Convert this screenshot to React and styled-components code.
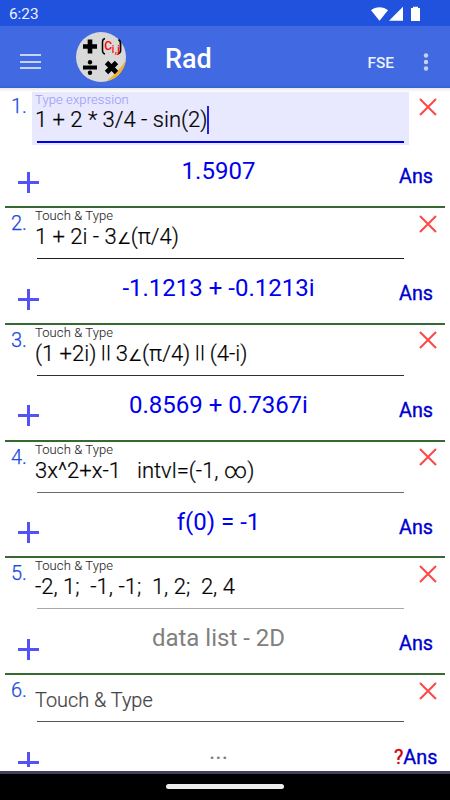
import React from 'react';
import styled, { createGlobalStyle } from 'styled-components';

const GlobalStyle = createGlobalStyle`
  * {
    box-sizing: border-box;
  }

  body {
    margin: 0;
    font-family: Roboto, 'DejaVu Sans', sans-serif;
    background: #fff;
  }
`;

const Screen = styled.div`
  display: flex;
  flex-direction: column;
  width: 450px;
  height: 800px;
  overflow: hidden;
  background: #fff;
`;

const StatusBar = styled.div`
  display: flex;
  flex: none;
  align-items: center;
  justify-content: space-between;
  height: 26px;
  padding: 2px 29px 0 9px;
  color: #eef2ff;
  background: #2152dd;
  font-size: 15.3px;
  line-height: 20px;
`;

const Toolbar = styled.header`
  display: flex;
  flex: none;
  align-items: center;
  height: 62px;
  padding: 0 20px;
  color: #fff;
  background: #4169e1;
  border-bottom: 2px solid #3763d8;
`;

const MenuButton = styled.button`
  display: flex;
  flex-direction: column;
  justify-content: space-between;
  width: 21px;
  height: 15px;
  margin-top: 11px;
  padding: 0;
  border: 0;
  background: none;
`;

const MenuLine = styled.span`
  height: 2px;
  background: #c6d2f6;
`;

const Logo = styled.svg`
  width: 52px;
  height: 52px;
  margin: 2px 0 0 34px;
`;

const Title = styled.h1`
  flex: 1;
  margin: 5px 0 0 38px;
  font-size: 27px;
  font-weight: 500;
  line-height: 32px;
`;

const FormatButton = styled.button`
  margin: 14px 29px 0 0;
  padding: 0;
  border: 0;
  color: #eef2ff;
  background: none;
  font: 500 15.4px/20px Roboto, sans-serif;
`;

const Dots = styled.svg`
  width: 6px;
  height: 20px;
  margin: 12px 1px 0 0;
`;

const List = styled.main`
  height: 683px;
  flex: none;
  padding: 3.25px 5px 0;
  background: linear-gradient(#e9e9e9, #fff 4px);
`;

const Row = styled.section`
  height: ${(props) => (props.$last ? 95 : 116.75)}px;
  border-bottom: ${(props) => (props.$last ? 'none' : '2px solid #376a33')};
`;

const InputLine = styled.div`
  display: flex;
  height: ${(props) => (props.$short ? 51 : 55)}px;
  padding-top: 1px;
`;

const Index = styled.div`
  width: 27px;
  padding: 2px 0 0 6px;
  color: #1a4bdf;
  font-size: 20px;
  font-weight: 300;
  line-height: 24px;
  -webkit-text-stroke: 0.25px;
`;

const Field = styled.div`
  width: 377px;
  height: ${(props) => (props.$short ? 49 : 53)}px;
  padding: 0 5px 0 3px;
  background: ${(props) => (props.$active ? '#e8e8ff' : 'transparent')};
`;

const Label = styled.div`
  height: 15px;
  color: ${(props) => (props.$active ? '#9f9ff8' : '#2a2a2a')};
  font-size: 13px;
  font-weight: 300;
  line-height: ${(props) => (props.$active ? 15 : 14)}px;
  letter-spacing: 0.1px;
  -webkit-text-stroke: 0.1px;
`;

const Expression = styled.div`
  display: flex;
  align-items: center;
  height: 26px;
  color: #000;
  font-size: 22px;
  font-weight: 300;
  line-height: 26px;
  white-space: pre;
  -webkit-text-stroke: 0.22px;
`;

const Angle = styled.span`
  font-size: 16px;
  line-height: 0;
  -webkit-text-stroke: 0;
`;

const Parallel = styled.span`
  margin: 0 -1px 0 -0.7px;
  font-size: 18.5px;
  font-weight: 400;
  line-height: 0;
  letter-spacing: 0.7px;
  vertical-align: 2.5px;
  -webkit-text-stroke: 0;
`;

const Caret = styled.span`
  width: 2px;
  height: 28px;
  background: #2020e8;
`;

const Hint = styled.div`
  height: 35px;
  padding-top: 12px;
  color: #444;
  font-size: 19.9px;
  font-weight: 300;
  line-height: 25px;
  -webkit-text-stroke: 0.2px;
`;

const Underline = styled.div`
  height: ${(props) => props.$thickness}px;
  margin: ${(props) => (props.$short ? 10 : 8)}px 0 0 2px;
  background: ${(props) => props.$color};
`;

const CloseIcon = styled.svg`
  width: 18px;
  height: 18px;
  margin: 5.5px 0 0 10px;
`;

const ResultLine = styled.div`
  display: grid;
  grid-template-columns: 46px 335px 1fr;
  height: ${(props) => (props.$short ? 44 : 59)}px;
`;

const PlusIcon = styled.svg`
  width: 21px;
  height: ${(props) => props.$height}px;
  margin: 25.5px 0 0 13px;
`;

const Result = styled.div`
  padding-top: 11px;
  color: ${(props) => props.$color};
  font-size: 24px;
  line-height: 28px;
  text-align: center;
  white-space: nowrap;
`;

const Answer = styled.div`
  padding: ${(props) => (props.$unknown ? '20px 0 0 8px' : '19px 0 0 13px')};
  color: #0000cf;
  font-size: 19.8px;
  line-height: ${(props) => (props.$unknown ? 23 : 24)}px;
  -webkit-text-stroke: 0.35px;
`;

const Unknown = styled.span`
  color: #d00000;
`;

const NavBar = styled.footer`
  display: flex;
  flex: 1;
  justify-content: center;
  padding-top: 10px;
  border-top: 3px solid #43415a;
  background: #000;
`;

const NavPill = styled.div`
  width: 118px;
  height: 5px;
  border-radius: 2.5px;
  background: #ededed;
`;

const entries = [
  { id: 1, label: 'Type expression', expression: '1 + 2 * 3/4 - sin(2)', result: '1.5907', line: '#0000e6', active: true },
  { id: 2, label: 'Touch & Type', expression: '1 + 2i - 3∠(π/4)', result: '-1.1213 + -0.1213i', line: '#1c1c1c' },
  { id: 3, label: 'Touch & Type', expression: '(1 +2i) || 3∠(π/4) || (4-i)', result: '0.8569 + 0.7367i', line: '#303030' },
  { id: 4, label: 'Touch & Type', expression: '3x^2+x-1   intvl=(-1, ∞)', result: 'f(0) = -1', line: '#6a6a6a' },
  { id: 5, label: 'Touch & Type', expression: '-2, 1;  -1, -1;  1, 2;  2, 4', result: 'data list - 2D', line: '#a8a8a8', muted: true },
  { id: 6, hint: 'Touch & Type', result: '...', line: '#555', muted: true, unknown: true },
];

// the angle and parallel operators are set smaller than the digits
const renderExpression = (text) =>
  text.split(/(∠|\|\|)/).map((part, i) => {
    if (part === '∠') return <Angle key={i}>{part}</Angle>;
    if (part === '||') return <Parallel key={i}>{part}</Parallel>;
    return part;
  });

const StatusIcons = () => (
  <svg width="50" height="16" viewBox="0 0 50 16" fill="#fff">
    <path d="M0 4.2C4.5.2 12.5.2 17 4.2L8.5 14.8Z" />
    <path d="M32 .8V14.8H18Z" />
    <path d="M42 .8h5v1.2h2v13h-9v-13h2Z" />
  </svg>
);

const AppLogo = () => (
  <Logo viewBox="0 0 52 52">
    <defs>
      <clipPath id="disc">
        <circle cx="26" cy="26" r="25" />
      </clipPath>
    </defs>
    <circle cx="26" cy="26" r="25" fill="#d9d9d9" />
    <path d="M29 52Q42 43 51 29V52Z" fill="#f0b429" clipPath="url(#disc)" />
    <path d="M8 15.500H22M15 8.500V22.500" stroke="#000" strokeWidth="4.600" />
    <path d="M8 36.500H22" stroke="#000" strokeWidth="4" />
    <circle cx="15" cy="31.200" r="2.200" />
    <circle cx="15" cy="41.800" r="2.200" />
    <path d="M31.500 31.500L41.500 41.500M41.500 31.500L31.500 41.500" stroke="#000" strokeWidth="4.800" />
    <path d="M30 7.500Q27.500 8 27.500 11V19.500Q27.500 22.500 30 23" fill="none" stroke="#000" strokeWidth="1.500" />
    <path d="M43.500 8.500Q45.500 10 45.500 12V19.500Q45.500 22 43 22.500" fill="none" stroke="#000" strokeWidth="1.800" />
    <text x="29.300" y="19" fontSize="12" fontWeight="500" fill="#f00">C</text>
    <text x="36.800" y="22" fontSize="10" fontWeight="500" letterSpacing="0.300" fill="#f00">i,j</text>
  </Logo>
);

const Entry = ({ entry, last }) => {
  // the last row is cut by the bottom of the list
  const plusHeight = last ? 15 : 21;

  return (
    <Row $last={last}>
      <InputLine $short={last}>
        <Index>{entry.id}.</Index>
        <Field $active={entry.active} $short={last}>
          {entry.hint ? (
            <Hint>{entry.hint}</Hint>
          ) : (
            <>
              <Label $active={entry.active}>{entry.label}</Label>
              <Expression>
                <span>{renderExpression(entry.expression)}</span>
                {entry.active && <Caret />}
              </Expression>
            </>
          )}
          <Underline $color={entry.line} $thickness={entry.active ? 2 : 1} $short={last} />
        </Field>
        <CloseIcon viewBox="0 0 18 18">
          <path d="M1 1L17 17M17 1L1 17" stroke="#ff4747" strokeWidth="2" />
        </CloseIcon>
      </InputLine>
      <ResultLine $short={last}>
        <PlusIcon viewBox={`0 0 21 ${plusHeight}`} $height={plusHeight}>
          <path d="M0 10.500H21M10.500 0V21" stroke="#5353f5" strokeWidth="3" />
        </PlusIcon>
        <Result $color={entry.muted ? '#808080' : '#0000f0'}>{entry.result}</Result>
        <Answer $unknown={entry.unknown}>
          {entry.unknown && <Unknown>?</Unknown>}Ans
        </Answer>
      </ResultLine>
    </Row>
  );
};

const App = () => {
  return (
    <>
      <GlobalStyle />
      <Screen>
        <StatusBar>
          <span>6:23</span>
          <StatusIcons />
        </StatusBar>
        <Toolbar>
          <MenuButton aria-label="Menu">
            <MenuLine />
            <MenuLine />
            <MenuLine />
          </MenuButton>
          <AppLogo />
          <Title>Rad</Title>
          <FormatButton>FSE</FormatButton>
          <Dots viewBox="0 0 6 20" fill="#c6d2f6">
            <circle cx="3" cy="3.500" r="2.200" />
            <circle cx="3" cy="10" r="2.200" />
            <circle cx="3" cy="16.500" r="2.200" />
          </Dots>
        </Toolbar>
        <List>
          {entries.map((entry, i) => (
            <Entry key={entry.id} entry={entry} last={i === entries.length - 1} />
          ))}
        </List>
        <NavBar>
          <NavPill />
        </NavBar>
      </Screen>
    </>
  );
};

export default App;
